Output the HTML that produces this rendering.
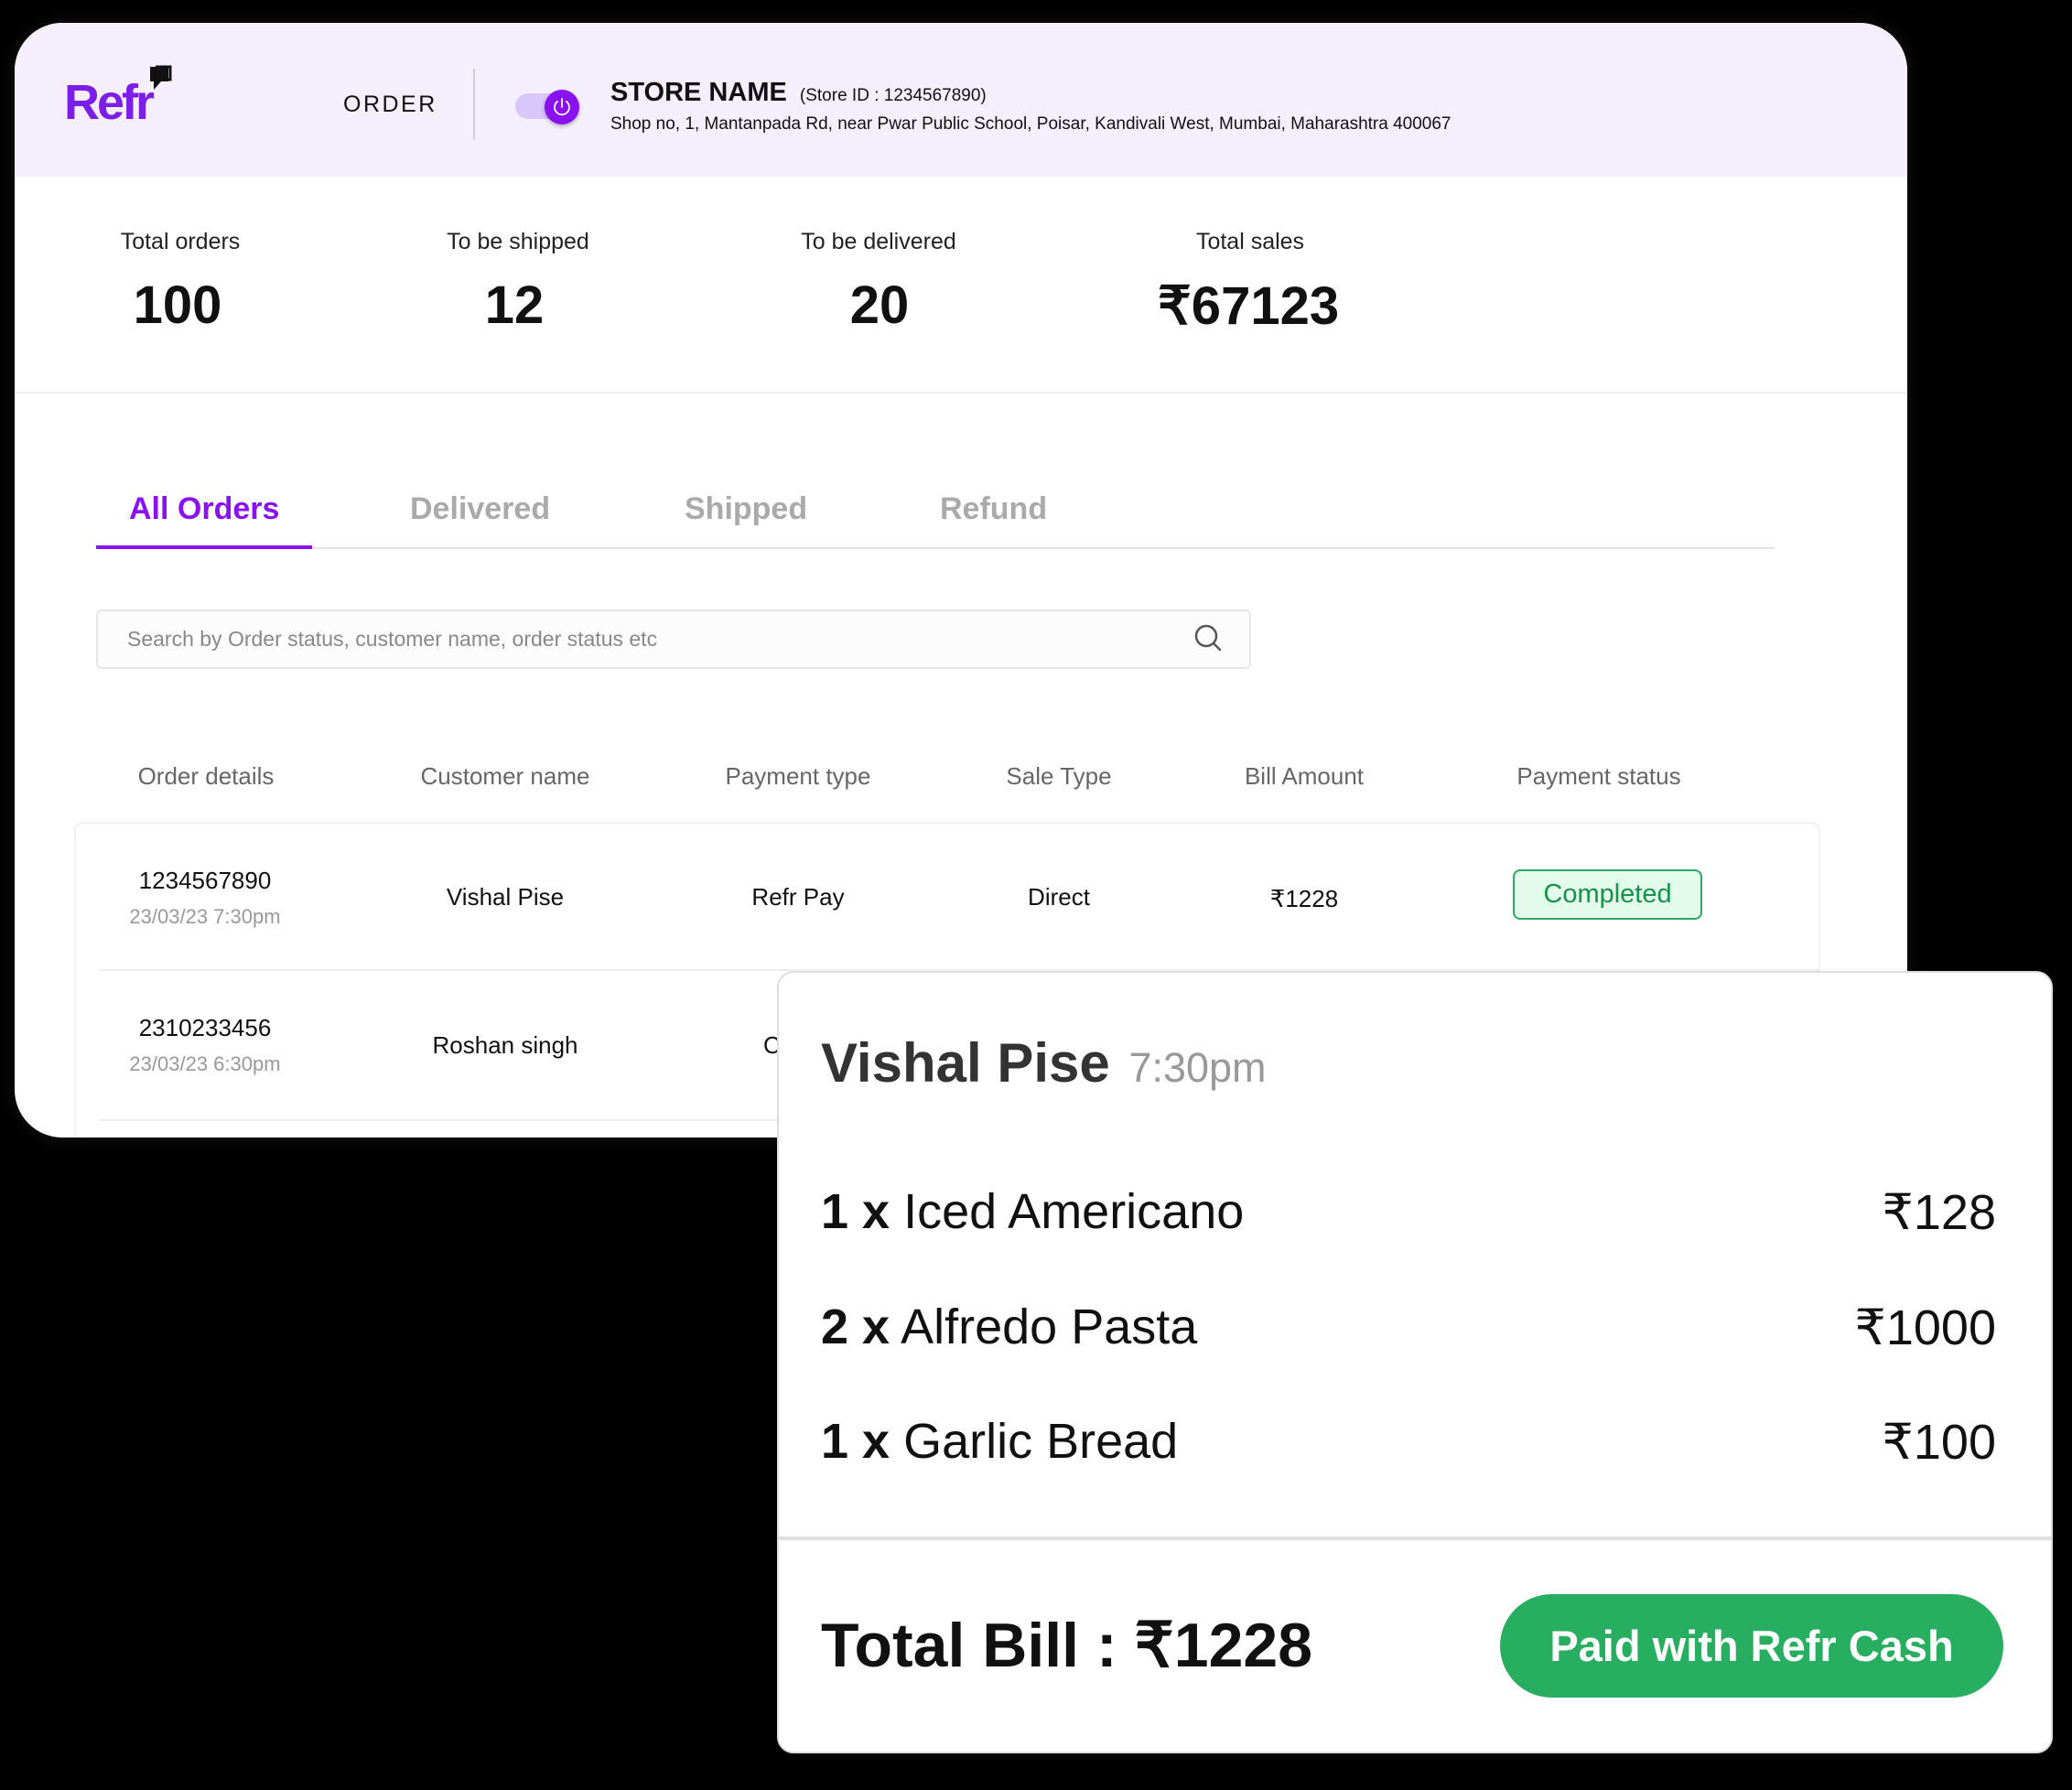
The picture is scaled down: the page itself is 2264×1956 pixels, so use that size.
<!DOCTYPE html>
<html><head><meta charset="utf-8"><style>
*{margin:0;padding:0;box-sizing:border-box}
body{width:2264px;height:1956px;background:#000;position:relative;overflow:hidden;font-family:"Liberation Sans","Noto Sans CJK SC",sans-serif;color:#111}
.a{position:absolute;white-space:nowrap}
.c{transform:translateX(-50%)}
#main{position:absolute;left:16px;top:25px;width:2068px;height:1218px;background:#fff;border-radius:52px;overflow:hidden;box-shadow:0 0 20px rgba(255,255,255,.08)}
#hdr{position:absolute;left:0;top:0;width:100%;height:168px;background:#f5effd}
.lbl{font-size:25px;color:#222;top:225px}
.num{font-size:58px;font-weight:bold;top:275px;color:#111}
.tab{font-size:34px;font-weight:bold;color:#aaa;top:512px}
.th{font-size:26px;color:#666;top:808px}
.td{font-size:26px;color:#111}
.dt{font-size:22px;color:#999}
#pop{position:absolute;left:849px;top:1061px;width:1394px;height:855px;background:#fff;border-radius:18px;border:2px solid #ddd}
.it{font-size:54px;color:#111}
</style></head><body>
<div id="main">
 <div id="hdr">
  <div class="a" style="left:54px;top:56px;font-size:54px;font-weight:bold;color:#7b1fe8;letter-spacing:-3px">Refr</div>
  <svg class="a" style="left:142px;top:44px" width="40" height="40" viewBox="0 0 40 40"><path d="M6 4h20v16h-8l-8 9v-9H6z" fill="#111"/><path d="M12 4h16v14h-6" fill="none" stroke="#111" stroke-width="3"/></svg>
  <div class="a" style="left:359px;top:75px;font-size:25px;letter-spacing:2.5px;color:#111">ORDER</div>
  <div class="a" style="left:501px;top:50px;width:2px;height:78px;background:#d0c8dc"></div>
  <div class="a" style="left:547px;top:77px;width:62px;height:28px;border-radius:14px;background:#d9c6fb"></div>
  <div class="a" style="left:579px;top:73px;width:38px;height:38px;border-radius:50%;background:#8a12f0;box-shadow:0 2px 4px rgba(0,0,0,.3)"></div>
  <svg class="a" style="left:586px;top:80px" width="24" height="24" viewBox="0 0 24 24"><path d="M7 6a8 8 0 1 0 10 0M12 3v9" fill="none" stroke="#fff" stroke-width="1.8" stroke-linecap="round"/></svg>
  <div class="a" style="left:651px;top:60px;font-size:29px;font-weight:bold;color:#111">STORE NAME <span style="font-size:19px;font-weight:normal;margin-left:6px">(Store ID : 1234567890)</span></div>
  <div class="a" style="left:651px;top:100px;font-size:19px;color:#111">Shop no, 1, Mantanpada Rd, near Pwar Public School, Poisar, Kandivali West, Mumbai, Maharashtra 400067</div>
 </div>
 <div class="a c lbl" style="left:181px">Total orders</div>
 <div class="a c lbl" style="left:550px">To be shipped</div>
 <div class="a c lbl" style="left:944px">To be delivered</div>
 <div class="a c lbl" style="left:1350px">Total sales</div>
 <div class="a c num" style="left:178px">100</div>
 <div class="a c num" style="left:546px">12</div>
 <div class="a c num" style="left:945px">20</div>
 <div class="a c num" style="left:1348px">₹67123</div>
 <div class="a" style="left:0;top:403px;width:100%;height:2px;background:#eee"></div>
 <div class="a tab" style="left:125px;color:#8a12f0">All Orders</div>
 <div class="a tab" style="left:432px">Delivered</div>
 <div class="a tab" style="left:732px">Shipped</div>
 <div class="a tab" style="left:1011px">Refund</div>
 <div class="a" style="left:89px;top:573px;width:1834px;height:2px;background:#e4e4e4"></div>
 <div class="a" style="left:89px;top:571px;width:236px;height:4px;background:#8a12f0"></div>
 <div class="a" style="left:89px;top:641px;width:1262px;height:65px;border:2px solid #e6e6e6;border-radius:6px;background:#fcfcfc"></div>
 <div class="a" style="left:123px;top:660px;font-size:23px;color:#888">Search by Order status, customer name, order status etc</div>
 <svg class="a" style="left:1287px;top:655px" width="34" height="34" viewBox="0 0 34 34"><circle cx="15" cy="15" r="11" fill="none" stroke="#555" stroke-width="2.5"/><path d="M23 23l7 7" stroke="#555" stroke-width="2.5" stroke-linecap="round"/></svg>
 <div class="a c th" style="left:209px">Order details</div>
 <div class="a c th" style="left:536px">Customer name</div>
 <div class="a c th" style="left:856px">Payment type</div>
 <div class="a c th" style="left:1141px">Sale Type</div>
 <div class="a c th" style="left:1409px">Bill Amount</div>
 <div class="a c th" style="left:1731px">Payment status</div>
 <div class="a" style="left:65px;top:873px;width:1908px;height:400px;border:2px solid #f2f2f2;border-radius:10px"></div>
 <div class="a c td" style="left:208px;top:922px">1234567890</div>
 <div class="a c dt" style="left:208px;top:964px">23/03/23 7:30pm</div>
 <div class="a c td" style="left:536px;top:940px">Vishal Pise</div>
 <div class="a c td" style="left:856px;top:940px">Refr Pay</div>
 <div class="a c td" style="left:1141px;top:940px">Direct</div>
 <div class="a c td" style="left:1409px;top:942px">₹1228</div>
 <div class="a" style="left:1637px;top:925px;width:207px;height:55px;border:2px solid #2fa866;border-radius:8px;background:#e2fbea;color:#16924c;font-size:29px;text-align:center;line-height:51px">Completed</div>
 <div class="a" style="left:92px;top:1034px;width:1880px;height:2px;background:#eee"></div>
 <div class="a c td" style="left:208px;top:1083px">2310233456</div>
 <div class="a c dt" style="left:208px;top:1125px">23/03/23 6:30pm</div>
 <div class="a c td" style="left:536px;top:1102px">Roshan singh</div>
 <div class="a td" style="left:818px;top:1102px">C</div>
 <div class="a" style="left:92px;top:1198px;width:1880px;height:2px;background:#eee"></div>
</div>
<div id="pop">
 <div class="a" style="left:46px;top:64px;font-size:60px;font-weight:bold;color:#333">Vishal Pise <span style="font-size:45px;font-weight:normal;color:#999;margin-left:4px">7:30pm</span></div>
 <div class="a it" style="left:46px;top:230px"><b>1 x</b> Iced Americano</div>
 <div class="a it" style="right:60px;top:230px">₹128</div>
 <div class="a it" style="left:46px;top:356px"><b>2 x</b> Alfredo Pasta</div>
 <div class="a it" style="right:60px;top:356px">₹1000</div>
 <div class="a it" style="left:46px;top:481px"><b>1 x</b> Garlic Bread</div>
 <div class="a it" style="right:60px;top:481px">₹100</div>
 <div class="a" style="left:0;top:616px;width:100%;height:4px;background:#ddd"></div>
 <div class="a" style="left:46px;top:696px;font-size:68px;font-weight:bold;color:#111">Total Bill : ₹1228</div>
 <div class="a" style="left:788px;top:679px;width:550px;height:113px;border-radius:57px;background:#27ae60;color:#fff;font-size:47px;font-weight:bold;text-align:center;line-height:113px">Paid with Refr Cash</div>
</div>
</body></html>
